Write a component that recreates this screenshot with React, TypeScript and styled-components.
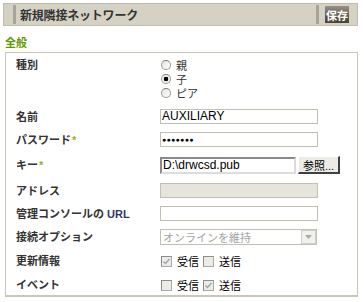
import React from "react";
import styled, { createGlobalStyle } from "styled-components";

const GlobalStyle = createGlobalStyle`
  html, body {
    margin: 0;
    padding: 0;
    background: #fff;
  }
  body {
    font-family: "Liberation Sans", "Noto Sans CJK JP", sans-serif;
    font-size: 11px;
    color: #333;
  }
`;

const Page = styled.div`
  width: 364px;
  height: 302px;
  padding: 3px 6px 0 3px;
  box-sizing: border-box;
`;

const TitleBar = styled.div`
  display: flex;
  align-items: center;
  height: 23px;
  background: #d5d1c3;
  border: 1px solid #bfbbad;
  box-sizing: border-box;
  padding: 0 8px 0 9px;
`;

const Grip = styled.div`
  width: 3px;
  align-self: stretch;
  margin: 1px 0;
  background-image: radial-gradient(circle, #8f8b7f 0.6px, transparent 0.9px);
  background-size: 2px 2px;
`;

const Title = styled.div`
  flex: 1;
  margin-left: 4px;
  font-size: 12px;
  font-weight: bold;
  color: #333;
  letter-spacing: -0.2px;
`;

const SaveButton = styled.div`
  margin-left: 6px;
  width: 24px;
  height: 17px;
  display: flex;
  align-items: center;
  justify-content: center;
  font-size: 11px;
  font-weight: bold;
  color: #fff;
  background: linear-gradient(#97928a, #5f594b 60%, #4a4436);
`;

const SectionTitle = styled.div`
  margin: 10px 0 0 2px;
  font-size: 11px;
  font-weight: bold;
  color: #669900;
  height: 14px;
  line-height: 14px;
`;

const Box = styled.div`
  margin: 2px 0 0 2px;
  border: 1px solid #c9c5b9;
  border-bottom: 2px solid #c9c5b9;
  box-sizing: border-box;
  padding: 5px 0 2px 10px;
  display: grid;
  grid-template-columns: 144px 1fr;
  row-gap: 8px;
  align-items: center;
`;

const Label = styled.div<{ $top?: boolean }>`
  font-weight: bold;
  font-size: 11px;
  line-height: 14px;
  color: #333;
  align-self: ${(p) => (p.$top ? "start" : "center")};
  white-space: nowrap;
`;

const Req = styled.span`
  color: #86b91a;
  margin-left: 1px;
`;

const Latin = styled.span`
  color: #2b3a66;
`;

const RadioGroup = styled.div`
  display: flex;
  flex-direction: column;
  padding-bottom: 1px;
`;

const RadioLine = styled.div`
  display: flex;
  align-items: center;
  height: 14px;
  gap: 5px;
`;

const RadioDot = styled.span<{ $on?: boolean }>`
  width: 10px;
  height: 10px;
  border-radius: 50%;
  box-sizing: border-box;
  border: 1px solid #9c9a94;
  border-top-color: #7c7a74;
  background: ${(p) =>
    p.$on
      ? "radial-gradient(circle, #000 2px, #f2f1ec 2.6px)"
      : "linear-gradient(135deg, #e4e2dc, #fff)"};
  margin-left: 1px;
`;

const TextInput = styled.div<{ $disabled?: boolean }>`
  width: 158px;
  height: 15px;
  box-sizing: border-box;
  border: 1px solid #c3bfb3;
  background: ${(p) => (p.$disabled ? "#e6e5dc" : "#fff")};
  font-size: 12px;
  line-height: 13px;
  padding-left: 1px;
  color: #000;
  overflow: hidden;
  white-space: nowrap;
`;

const Dots = styled.span`
  font-size: 7px;
  letter-spacing: 0.3px;
  line-height: 13px;
  vertical-align: top;
`;

const FileRow = styled.div`
  display: flex;
  align-items: center;
  gap: 2px;
  height: 20px;
`;

const FileInput = styled.div`
  width: 136px;
  height: 17px;
  box-sizing: border-box;
  border: 2px solid #8a8a8a;
  border-right-color: #dcdcdc;
  border-bottom-color: #dcdcdc;
  font-size: 12px;
  line-height: 13px;
  padding-left: 1px;
  color: #000;
  white-space: nowrap;
`;

const Browse = styled.div`
  width: 42px;
  height: 18px;
  box-sizing: border-box;
  border: 1px solid #fff;
  border-right: 2px solid #404040;
  border-bottom: 2px solid #404040;
  background: #ecebe5;
  display: flex;
  align-items: center;
  justify-content: center;
  font-size: 11px;
  color: #000;
`;

const Select = styled.div`
  width: 157px;
  height: 16px;
  box-sizing: border-box;
  border: 1px solid #c3bfb3;
  display: flex;
  align-items: center;
  color: #a3a3a3;
  font-size: 11px;
  padding-left: 2px;
`;

const SelectText = styled.span`
  flex: 1;
`;

const Arrow = styled.span`
  width: 15px;
  height: 14px;
  box-sizing: border-box;
  border: 1px solid #cfcfcf;
  background: #f1f1ee;
  display: flex;
  align-items: center;
  justify-content: center;
`;

const CheckGroup = styled.div`
  display: flex;
  align-items: center;
  height: 16px;
  font-size: 11px;
  color: #000;
`;

const Check = styled.span<{ $gap?: number }>`
  width: 11px;
  height: 11px;
  box-sizing: border-box;
  border: 1px solid #a9a9a9;
  border-top-color: #8c8c8c;
  border-left-color: #8c8c8c;
  background: #ecece6;
  display: flex;
  align-items: center;
  justify-content: center;
  margin-left: ${(p) => p.$gap ?? 1}px;
  margin-right: 5px;
`;

function Radio({ on, text }: { on?: boolean; text: string }) {
  return (
    <RadioLine>
      <RadioDot $on={on} />
      <span>{text}</span>
    </RadioLine>
  );
}

function CheckBox({ on, gap }: { on?: boolean; gap?: number }) {
  return (
    <Check $gap={gap}>
      {on && (
        <svg width="9" height="9" viewBox="0 0 9 9">
          <path d="M1.5 4.5 L3.5 6.5 L7.5 2" stroke="#9ea5b2" strokeWidth="1.4" fill="none" />
        </svg>
      )}
    </Check>
  );
}

export default function App() {
  return (
    <Page>
      <GlobalStyle />
      <TitleBar>
        <Grip />
        <Title>新規隣接ネットワーク</Title>
        <Grip />
        <SaveButton>保存</SaveButton>
      </TitleBar>
      <SectionTitle>全般</SectionTitle>
      <Box>
        <Label $top>種別</Label>
        <RadioGroup>
          <Radio text="親" />
          <Radio on text="子" />
          <Radio text="ピア" />
        </RadioGroup>

        <Label>名前</Label>
        <TextInput>AUXILIARY</TextInput>

        <Label>
          パスワード<Req>*</Req>
        </Label>
        <TextInput>
          <Dots>●●●●●●●</Dots>
        </TextInput>

        <Label>
          キー<Req>*</Req>
        </Label>
        <FileRow>
          <FileInput>D:\drwcsd.pub</FileInput>
          <Browse>参照...</Browse>
        </FileRow>

        <Label>アドレス</Label>
        <TextInput $disabled />

        <Label>
          管理コンソールの <Latin>URL</Latin>
        </Label>
        <TextInput />

        <Label>接続オプション</Label>
        <Select>
          <SelectText>オンラインを維持</SelectText>
          <Arrow>
            <svg width="7" height="4" viewBox="0 0 7 4">
              <path d="M0 0 H7 L3.5 4 Z" fill="#a8a8a8" />
            </svg>
          </Arrow>
        </Select>

        <Label>更新情報</Label>
        <CheckGroup>
          <CheckBox on />
          受信
          <CheckBox gap={4} />
          送信
        </CheckGroup>

        <Label>イベント</Label>
        <CheckGroup>
          <CheckBox />
          受信
          <CheckBox gap={4} on />
          送信
        </CheckGroup>
      </Box>
    </Page>
  );
}
